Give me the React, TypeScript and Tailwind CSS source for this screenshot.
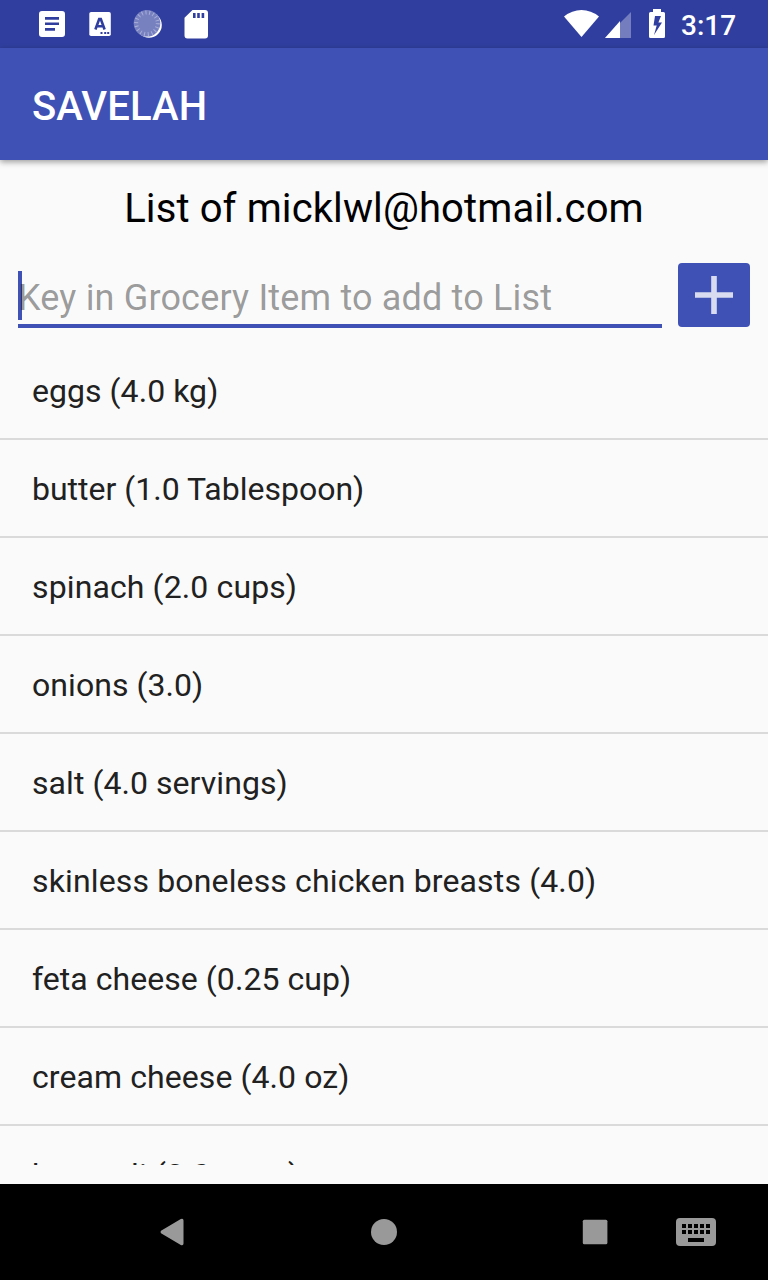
import React from 'react';

const items = [
  { text: 'eggs (4.0 kg)', tracking: 'tracking-[0.05px]' },
  { text: 'butter (1.0 Tablespoon)', tracking: 'tracking-normal' },
  { text: 'spinach (2.0 cups)', tracking: 'tracking-[0.12px]' },
  { text: 'onions (3.0)', tracking: 'tracking-[0.06px]' },
  { text: 'salt (4.0 servings)', tracking: 'tracking-[0.06px]' },
  { text: 'skinless boneless chicken breasts (4.0)', tracking: 'tracking-[0.145px]' },
  { text: 'feta cheese (0.25 cup)', tracking: 'tracking-[0.05px]' },
  { text: 'cream cheese (4.0 oz)', tracking: 'tracking-[0.08px]' },
  { text: 'broccoli (2.0 cups)', tracking: 'tracking-[0.1px]' },
];

function StatusBar() {
  return (
    <div className="flex h-12 shrink-0 items-center justify-between bg-[#303f9f] pr-[13px] text-white">
      <svg width="220" height="48" viewBox="0 0 220 48" fill="white">
        <path fillRule="evenodd" d="M42 11h20a3 3 0 0 1 3 3v20a3 3 0 0 1-3 3H42a3 3 0 0 1-3-3V14a3 3 0 0 1 3-3zM45 17v2.7h14V17zM45 22.4v2.7h14v-2.7zM45 28v2.7h10V28z" />
        <rect x="89.300" y="12" width="21.500" height="24" rx="1.800" />
        <path d="M95.400 29.500 99.200 19h1.600l3.800 10.500M97 26.200h6" fill="none" stroke="#303f9f" strokeWidth="2.600" />
        <path d="M100.500 32h2v2h-2zM104.200 32h2v2h-2zM107.200 32h2v2h-2z" fill="#303f9f" />
        <circle cx="149" cy="25" r="12.800" />
        <circle cx="147" cy="23.300" r="13.300" fill="#7881c0" />
        <circle cx="147" cy="23.300" r="10.800" fill="none" stroke="#a9afd8" strokeWidth="4" strokeDasharray="1 2.770" />
        <path fillRule="evenodd" d="M192.500 10H205q3 0 3 3v22.500q0 3-3 3h-17.500q-3 0-3-3V17.800zM193 13v5h2.600v-5zM197.200 13v5h2.600v-5zM201.600 13v5h2.600v-5z" />
      </svg>
      <div className="flex h-12 items-center">
        <svg width="118" height="48" viewBox="550 0 118 48" fill="white">
          <path d="M564 16.500Q572 10 581.500 10T599 16.500L581.500 37z" />
          <path d="M631 12v26H605z" fillOpacity=".33" />
          <path d="M620 21v17H605z" />
          <path fillRule="evenodd" d="M653 9h8v3h2.500q1.500 0 1.500 1.500v23q0 1.500-1.500 1.500h-13q-1.500 0-1.500-1.500v-23q0-1.500 1.500-1.500h2.500zM655 16l-1.500 9.500h3.200L654 35l8-12.500h-3.600L661 16z" />
        </svg>
        <span className="w-[87px] pt-1 text-[28px] leading-8 font-medium"><span className="ml-[13px]">3:17</span></span>
      </div>
    </div>
  );
}

function NavigationBar() {
  return (
    <nav className="h-24 shrink-0 bg-black">
      <svg width="768" height="96" viewBox="0 1184 768 96" fill="#999">
        <path d="M161 1230.800 180.800 1219q2.700-1 2.700 1.500v23q0 2.500-2.700 1.500L161 1233.200q-1-1.200 0-2.400z" />
        <circle cx="384" cy="1232" r="13" />
        <rect x="582.800" y="1219.700" width="24.600" height="24.600" rx="1.500" />
        <rect x="676" y="1218" width="40" height="28" rx="4" />
        <path d="M682 1226H710M682 1232H710" fill="none" stroke="black" strokeWidth="4" strokeDasharray="4 2" />
        <path d="M688 1238h16v4h-16z" fill="black" />
      </svg>
    </nav>
  );
}

export default function App() {
  return (
    <div className="flex h-[1280px] w-[768px] flex-col overflow-hidden bg-[#fafafa] font-[Roboto,sans-serif]">
      <StatusBar />
      <header className="z-10 flex h-28 shrink-0 items-center bg-[#3f51b5] px-8 pt-1.5 shadow-[0_2px_6px_rgba(0,0,0,0.38)]">
        <h1 className="text-[40px] leading-[48px] font-medium tracking-[0.1px] text-white">SAVELAH</h1>
      </header>
      <main className="flex min-h-0 flex-1 flex-col">
        <h2 className="mt-[25px] h-[53px] text-center text-[40px] leading-[48px] tracking-[0.11px] text-black">List of micklwl@hotmail.com</h2>
        <div className="flex h-[104px] shrink-0 px-[18px] pt-[25px]">
          <div className="mt-2 mr-4 flex h-[57px] w-[644px] border-b-4 border-[#3f51b5]">
            <span className="h-[49px] w-1 shrink-0 bg-[#3f51b5]" />
            <span className="-ml-1 pt-1.5 text-[36px] leading-[42px] tracking-[0.17px] whitespace-nowrap text-black/40">Key in Grocery Item to add to List</span>
          </div>
          <button aria-label="Add item" className="flex h-16 w-[72px] items-center justify-center rounded-[4px] bg-[#3f51b5]">
            <svg width="72" height="64" viewBox="0 0 72 64"><path d="M33.200 13h5.600v16.200h16.200v5.600H38.800v16.200h-5.600V34.800H17v-5.600h16.200z" fill="#d9dcf0" /></svg>
          </button>
        </div>
        <ul className="h-[823px] shrink-0 overflow-hidden">
          {items.map(({ text, tracking }) => (
            <li key={text} className={`flex h-[98px] items-center border-b-2 border-[#dadada] px-8 pt-0.5 text-[32px] text-[#212121] ${tracking}`}>{text}</li>
          ))}
        </ul>
      </main>
      <NavigationBar />
    </div>
  );
}
